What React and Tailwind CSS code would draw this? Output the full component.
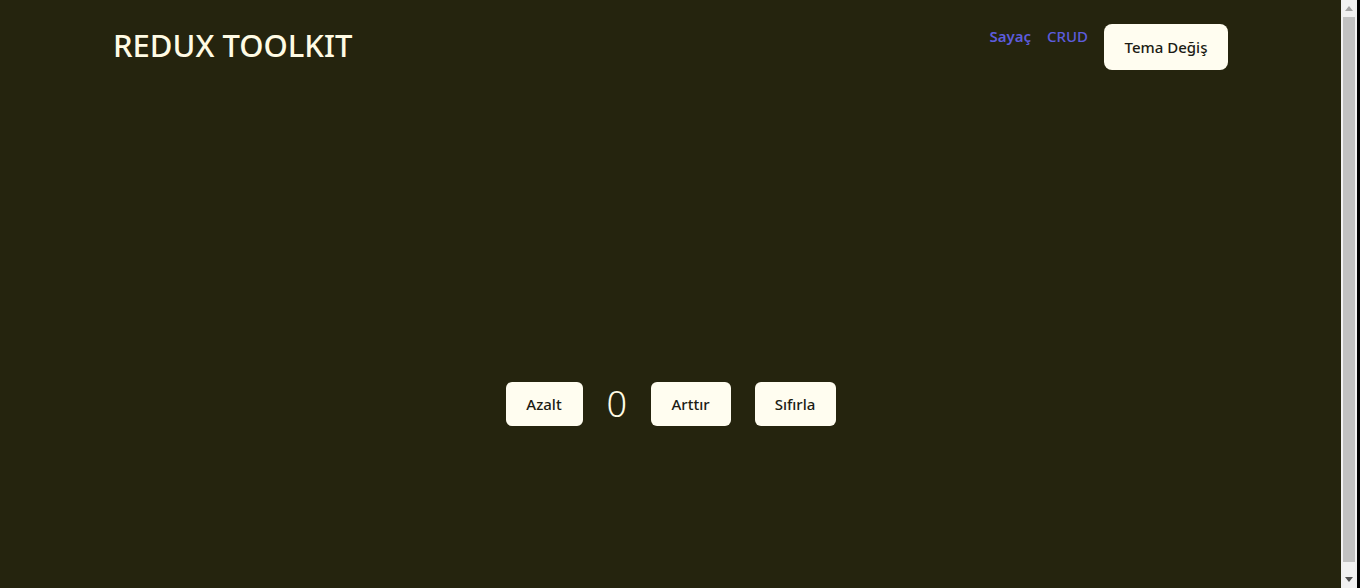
import { useState } from "react";

function App() {
  const [count, setCount] = useState(0);

  return (
    <div className="flex h-[588px] w-[1360px] overflow-hidden bg-black" style={{ fontFamily: '"Noto Sans", "Open Sans", sans-serif' }}>
      {/* Page */}
      <div className="flex-1 bg-[#25240e] text-[#fffbe4]">
        {/* Header */}
        <div className="flex items-start justify-between px-[113px] pt-[24px]">
          <h1 className="mt-[2px] text-[31px] font-medium leading-[38px]">
            REDUX TOOLKIT
          </h1>

          <div className="flex items-start">
            <a className="mt-[2px] text-[15px] font-semibold leading-[20px] text-[#5c5cdc]">Sayaç</a>
            <a className="ml-[16px] mt-[2px] text-[15px] font-medium leading-[20px] text-[#5c5cdc]">CRUD</a>
            <button className="ml-[16px] h-[46px] w-[124px] rounded-lg bg-[#fffdf0] text-[15px] font-medium text-[#1c1c14]">
              Tema Değiş
            </button>
          </div>
        </div>

        {/* Counter */}
        <div className="mt-[312px] flex items-center justify-center gap-[24px]">
          <button
            onClick={() => setCount(count - 1)}
            className="h-[44px] w-[77px] rounded-md bg-[#fffdf0] text-[15px] font-medium text-[#1c1c14]"
          >
            Azalt
          </button>
          <span className="w-[20px] text-center text-[36px] font-light leading-[44px]">{count}</span>
          <button
            onClick={() => setCount(count + 1)}
            className="h-[44px] w-[80px] rounded-md bg-[#fffdf0] text-[15px] font-medium text-[#1c1c14]"
          >
            Arttır
          </button>
          <button
            onClick={() => setCount(0)}
            className="h-[44px] w-[81px] rounded-md bg-[#fffdf0] text-[15px] font-medium text-[#1c1c14]"
          >
            Sıfırla
          </button>
        </div>
      </div>

      {/* Scrollbar */}
      <div className="flex w-[16px] flex-col bg-[#f1f1f1]">
        <div className="flex h-[17px] items-center justify-center">
          <svg width="8" height="5" viewBox="0 0 8 5"><path d="M0 5 L4 0 L8 5 Z" fill="#a3a3a3" /></svg>
        </div>
        <div className="mx-[2px] h-[545px] bg-[#c1c1c1]" />
        <div className="flex-1" />
        <div className="flex h-[17px] items-center justify-center">
          <svg width="8" height="5" viewBox="0 0 8 5"><path d="M0 0 L4 5 L8 0 Z" fill="#505050" /></svg>
        </div>
      </div>
      <div className="w-[3px] bg-black" />
    </div>
  );
}

export default App;
